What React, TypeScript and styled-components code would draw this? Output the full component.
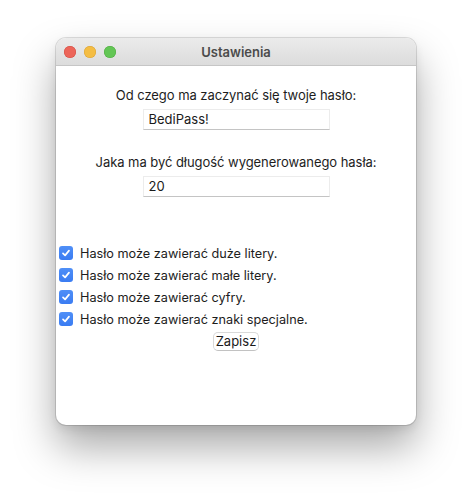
import React from "react";
import styled, { createGlobalStyle } from "styled-components";

const Global = createGlobalStyle`
  html, body { margin: 0; padding: 0; background: #ffffff; }
  body { font-family: Inter, "Liberation Sans", Arial, sans-serif; -webkit-font-smoothing: antialiased; }
`;

const Page = styled.div`
  width: 472px;
  height: 500px;
  padding: 38px 0 0 56px;
  box-sizing: border-box;
`;

const Window = styled.div`
  width: 360px;
  height: 387px;
  border-radius: 10px;
  background: #ffffff;
  overflow: hidden;
  box-shadow: 0 0 0 1px rgba(0, 0, 0, 0.12), 0 22px 42px rgba(0, 0, 0, 0.34), 0 4px 10px rgba(0,0,0,0.08);
  display: flex;
  flex-direction: column;
`;

const TitleBar = styled.div`
  height: 27px;
  border-bottom: 1px solid #c6c6c6;
  background: linear-gradient(#ebebeb, #dcdcdc);
  display: flex;
  align-items: center;
  position: relative;
  padding-left: 8px;
  gap: 8px;
`;

const Light = styled.span<{ $c: string; $b: string }>`
  width: 12px;
  height: 12px;
  border-radius: 50%;
  background: ${(p) => p.$c};
  box-shadow: inset 0 0 0 0.5px ${(p) => p.$b};
`;

const Title = styled.div`
  position: absolute;
  left: 0;
  right: 0;
  top: 0;
  bottom: 0;
  display: flex;
  align-items: center;
  justify-content: center;
  font-weight: 600;
  font-size: 13px;
  color: #4b4b4b;
  pointer-events: none;
`;

const Content = styled.div`
  display: flex;
  flex-direction: column;
  align-items: center;
  padding-top: 21px;
`;

const Label = styled.div<{ $mt: number }>`
  font-size: 13px;
  letter-spacing: -0.05px;
  line-height: 16px;
  color: #1d1d1d;
  margin-top: ${(p) => p.$mt}px;
`;

const Field = styled.div`
  margin-top: 6px;
  width: 187px;
  height: 21px;
  box-sizing: border-box;
  border: 1px solid #ececec;
  border-bottom-color: #c4c4c4;
  background: #fff;
  font-size: 13px;
  line-height: 19px;
  padding-left: 5px;
  color: #1a1a1a;
`;

const Checks = styled.div`
  align-self: stretch;
  margin-top: 45px;
  padding-left: 3px;
  display: flex;
  flex-direction: column;
`;

const Row = styled.div`
  height: 22px;
  display: flex;
  align-items: center;
  gap: 7px;
  font-size: 12.7px;
  color: #1d1d1d;
`;

const Box = styled.span`
  width: 14px;
  height: 14px;
  border-radius: 3px;
  background: linear-gradient(#4f8ff7, #3a7cf2);
  display: flex;
  align-items: center;
  justify-content: center;
`;

const Button = styled.div`
  margin-top: 2px;
  width: 46px;
  height: 19px;
  box-sizing: border-box;
  border: 1px solid #d9d9d9;
  border-bottom-color: #c2c2c2;
  border-radius: 5px;
  background: #ffffff;
  font-size: 13px;
  line-height: 17px;
  text-align: center;
  color: #1a1a1a;
`;

const Check = () => (
  <Box>
    <svg width="10" height="10" viewBox="0 0 10 10">
      <path d="M2 5.3 L4.1 7.4 L8 2.6" fill="none" stroke="#fff" strokeWidth="1.7" strokeLinecap="round" strokeLinejoin="round" />
    </svg>
  </Box>
);

const items = [
  "Hasło może zawierać duże litery.",
  "Hasło może zawierać małe litery.",
  "Hasło może zawierać cyfry.",
  "Hasło może zawierać znaki specjalne.",
];

export default function App() {
  return (
    <Page>
      <Global />
      <Window>
        <TitleBar>
          <Light $c="#ec6559" $b="#d24c41" />
          <Light $c="#f4bd43" $b="#d9a134" />
          <Light $c="#63c655" $b="#4eaa3f" />
          <Title>Ustawienia</Title>
        </TitleBar>
        <Content>
          <Label $mt={0}>Od czego ma zaczynać się twoje hasło:</Label>
          <Field>BediPass!</Field>
          <Label $mt={24}>Jaka ma być długość wygenerowanego hasła:</Label>
          <Field>20</Field>
          <Checks>
            {items.map((t) => (
              <Row key={t}>
                <Check />
                {t}
              </Row>
            ))}
          </Checks>
          <Button>Zapisz</Button>
        </Content>
      </Window>
    </Page>
  );
}
